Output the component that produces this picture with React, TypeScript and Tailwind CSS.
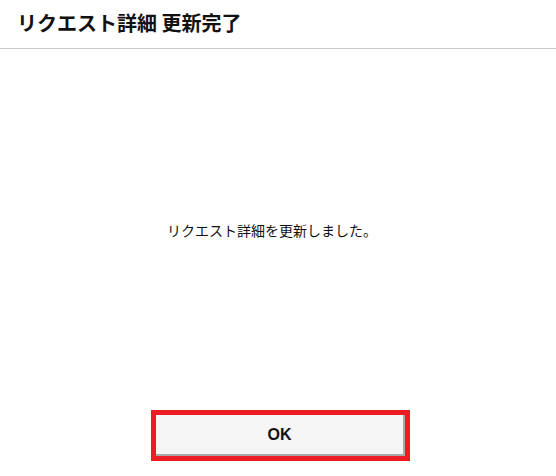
export default function App() {
  const jp = { fontFamily: '"Noto Sans CJK JP", "Noto Sans", sans-serif' };

  return (
    <div className="flex h-[476px] w-full flex-col bg-white text-[#111]" style={jp}>
      {/* Header */}
      <div className="flex h-[49px] items-center border-b border-[#c8c8c8] pl-[17px] pb-[3px]">
        <h1 className="text-[20px] font-bold leading-none tracking-[0px]">リクエスト詳細 更新完了</h1>
      </div>

      {/* Message */}
      <div className="flex flex-1 items-center justify-center pr-[12px]">
        <p className="text-[14px] leading-none">リクエスト詳細を更新しました。</p>
      </div>

      {/* Action */}
      <div className="flex justify-center pb-[15px] pl-[5px]">
        <div className="border-[5px] border-[#ed1c24]">
          <button
            className="flex h-[41px] w-[249px] items-center justify-center border-b-2 border-r-2 border-[#a9a9a9] bg-[#f5f5f5] text-[16px] font-bold text-[#111]"
            style={{ fontFamily: '"Liberation Sans", Arial, sans-serif' }}
          >
            OK
          </button>
        </div>
      </div>
    </div>
  );
}
